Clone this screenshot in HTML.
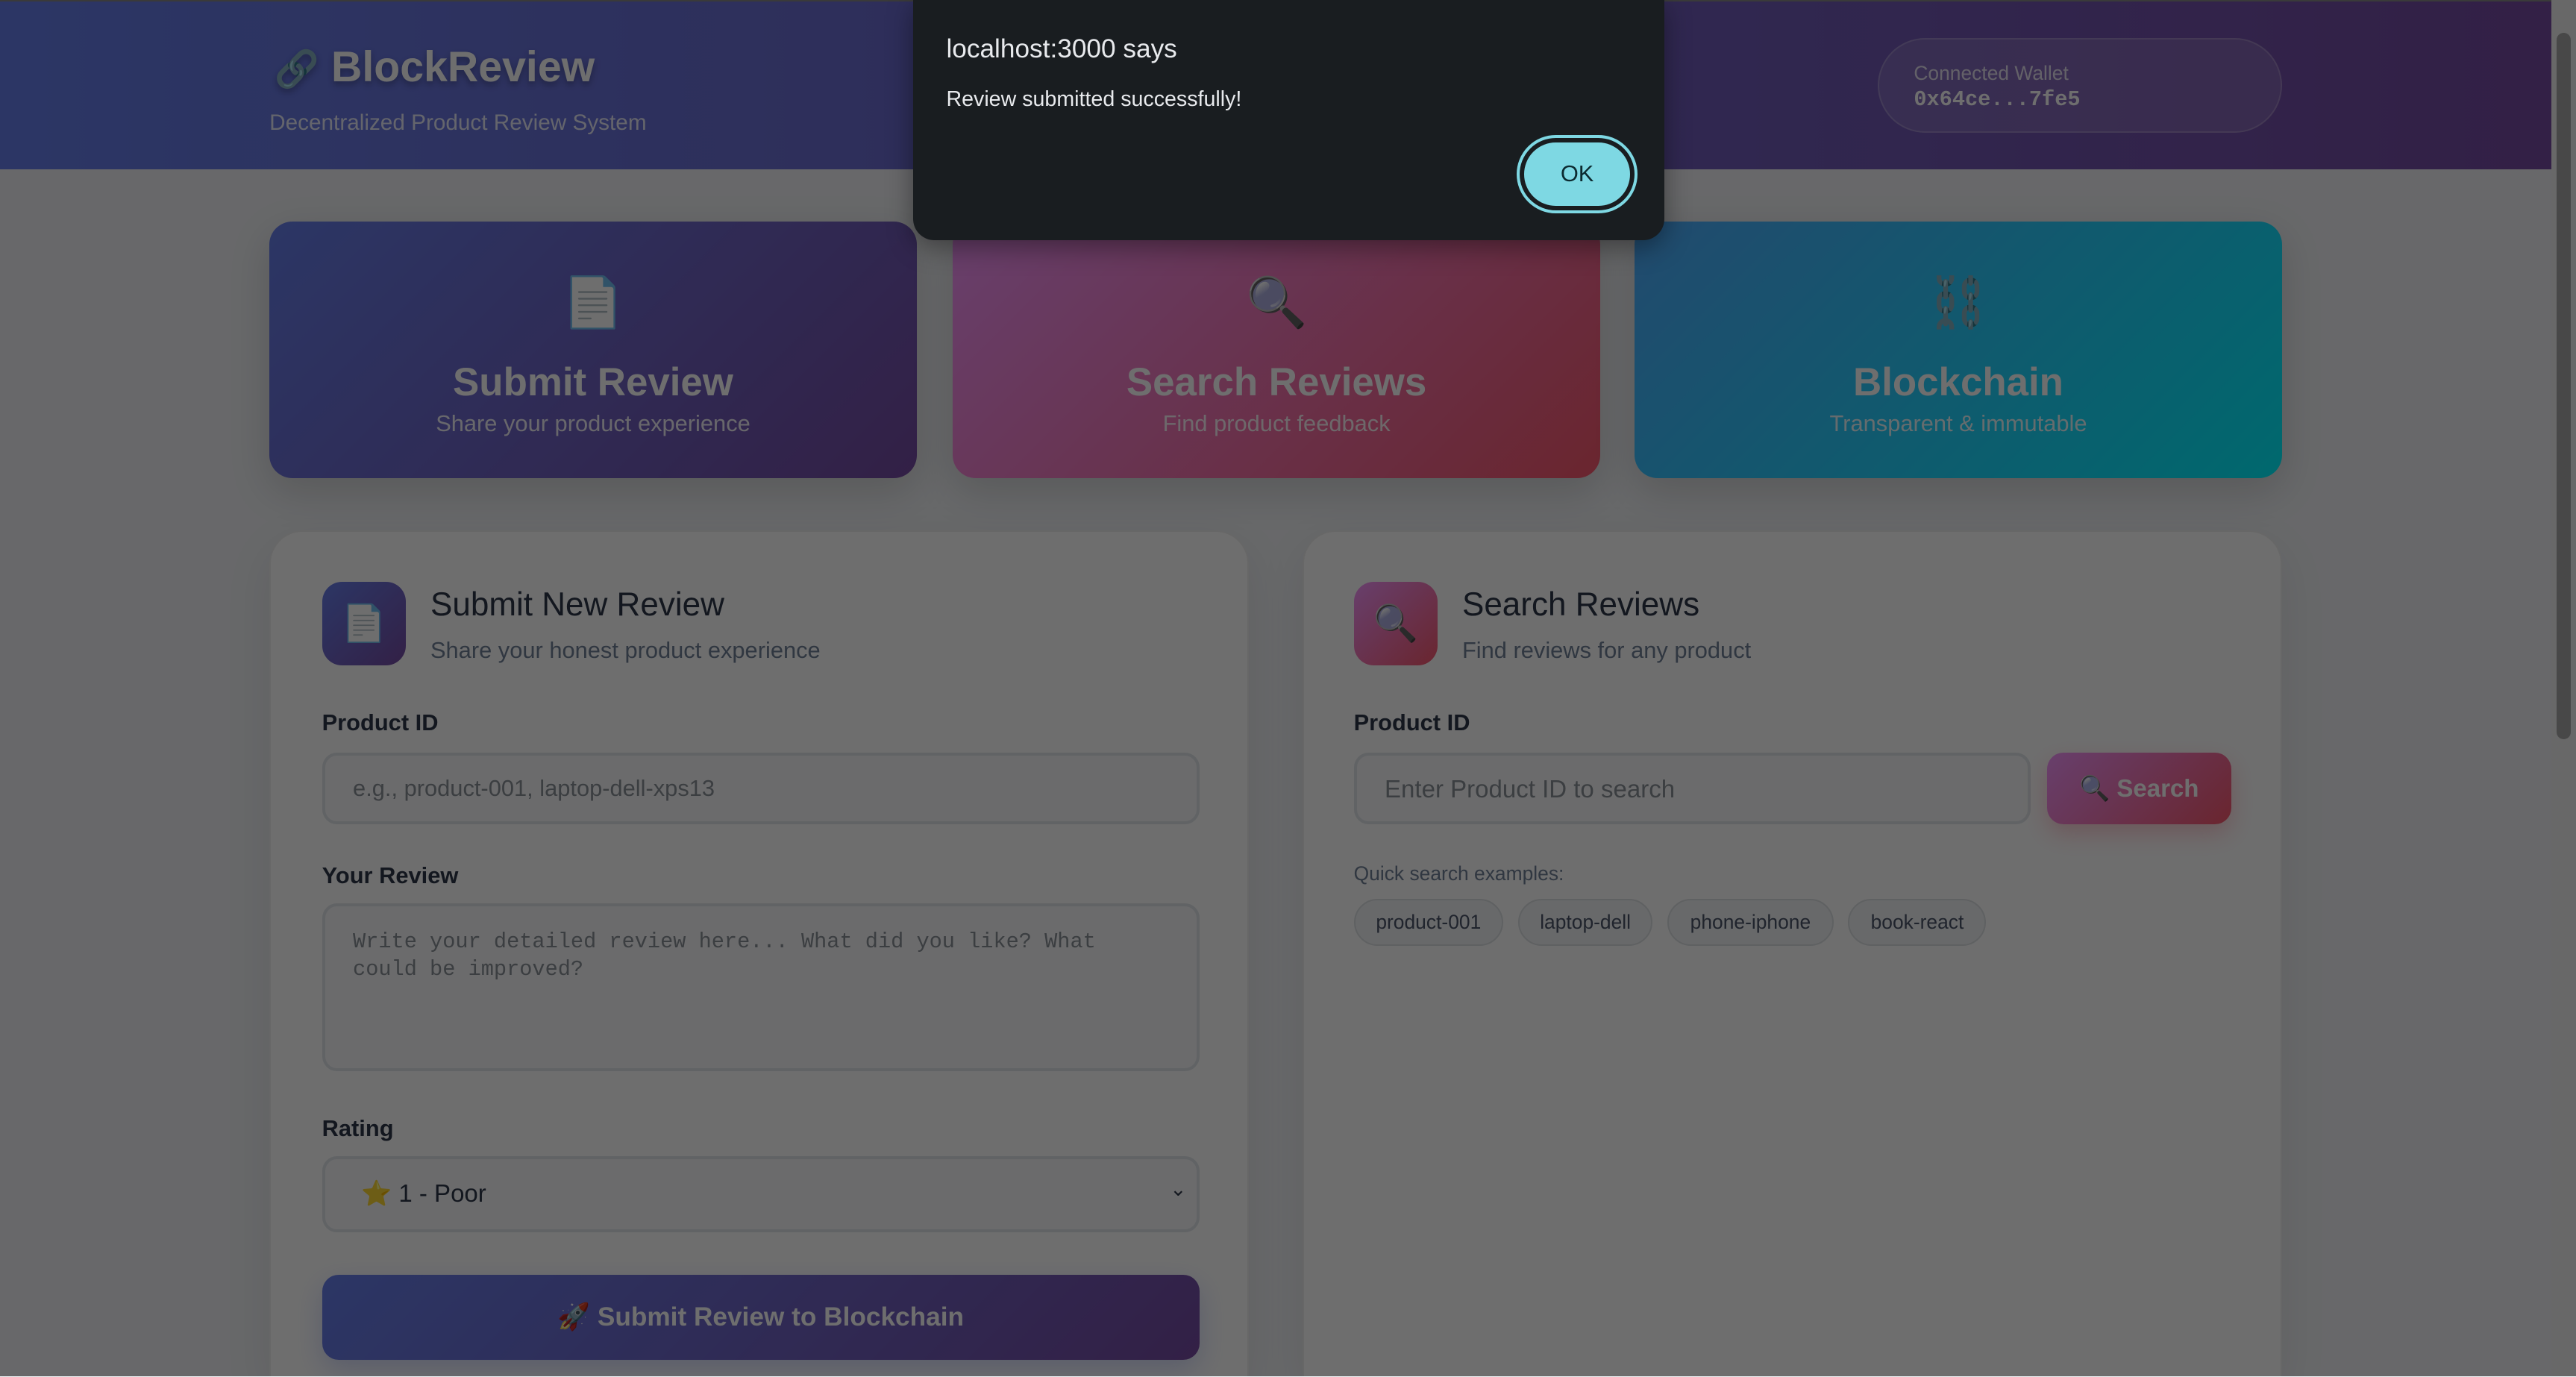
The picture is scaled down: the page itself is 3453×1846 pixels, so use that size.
<!DOCTYPE html>
<html><head><meta charset="utf-8">
<style>
*{box-sizing:border-box;margin:0;padding:0}
html,body{width:3453px;height:1846px;overflow:hidden;background:#f0f2f5}
#root{zoom:2.2022;position:relative;width:1568px;height:838px;font-family:"Liberation Sans","DejaVu Sans",sans-serif;overflow:hidden;background:#f0f2f5}
.abs{position:absolute}
.header{left:0;top:1px;width:1553px;height:102px;background:linear-gradient(90deg,#667eea 0%,#764ba2 100%)}
.topline{left:0;top:0;width:1568px;height:1px;background:#888}
.logo{left:167px;top:26px;font-size:26px;font-weight:bold;color:#fff;text-shadow:0 2px 4px rgba(0,0,0,.3)}
.sub{left:164px;top:67px;font-size:13.5px;color:rgba(255,255,255,.85)}
.wallet{left:1143px;top:23px;width:246px;height:58px;border-radius:29px;background:rgba(255,255,255,.12);border:1px solid rgba(255,255,255,.2);padding:14px 0 0 21px;color:rgba(255,255,255,.8)}
.wallet .a{font-size:12px}
.wallet .b{font-family:"Liberation Mono",monospace;font-weight:bold;font-size:13px;color:#fff;margin-top:1px}
.fc{top:135px;width:394px;height:156px;border-radius:14px;color:#fff;text-align:center;box-shadow:0 8px 25px rgba(0,0,0,.15)}
.fc .i{font-size:30px;margin-top:28px;height:42px;line-height:42px}
.fc .t{font-size:24px;font-weight:bold;margin-top:14px}
.fc .s{font-size:14px;opacity:.9;margin-top:3px}
.panel{top:323px;width:596px;height:516px;background:#fff;border-radius:20px 20px 0 0;box-shadow:0 10px 30px rgba(0,0,0,.08);border:1px solid #eee}
.ib{width:51px;height:51px;border-radius:12px;font-size:22px;text-align:center;line-height:51px}
.h{font-size:20px;color:#2d3748}
.hs{font-size:14px;color:#718096}
.lbl{font-size:14px;font-weight:bold;color:#2d3748}
.inp{height:44px;border:2px solid #e1e5e9;border-radius:9px;background:#f8f9fa;font-size:14px;color:#8a8f96;padding:12px 0 0 17px}
.chip{top:547px;height:29px;border:1px solid #dde0e4;border-radius:15px;background:#f1f3f5;font-size:12px;color:#4a5568;text-align:center;line-height:27px}
.overlay{left:0;top:0;width:1568px;height:838px;background:rgba(0,0,0,.57)}
.dlg{left:556px;top:0;width:457px;height:146px;background:#191d20;border-radius:0 0 13px 13px;box-shadow:0 4px 16px rgba(0,0,0,.4);color:#e8eaed;font-family:"Liberation Sans","DejaVu Sans",sans-serif}
.ok{left:369px;top:84px;width:70px;height:44px;border-radius:22px;background:#7ed8e3;border:3px solid #191d20;outline:2px solid #7ed8e3;color:#0c2a30;font-size:14px;text-align:center;line-height:38px}
</style></head><body><div id="root">
<div class="abs topline"></div>
<div class="abs header"></div>
<div class="abs logo"><span style="font-size:22px;font-weight:normal">🔗</span> BlockReview</div>
<div class="abs sub">Decentralized Product Review System</div>
<div class="abs wallet"><div class="a">Connected Wallet</div><div class="b">0x64ce...7fe5</div></div>

<div class="abs fc" style="left:164px;background:linear-gradient(135deg,#667eea,#764ba2)"><div class="i">📄</div><div class="t">Submit Review</div><div class="s">Share your product experience</div></div>
<div class="abs fc" style="left:580px;background:linear-gradient(135deg,#f093fb,#f5576c)"><div class="i">🔍</div><div class="t">Search Reviews</div><div class="s">Find product feedback</div></div>
<div class="abs fc" style="left:995px;background:linear-gradient(135deg,#4facfe,#00f2fe)"><div class="i">⛓️</div><div class="t">Blockchain</div><div class="s">Transparent &amp; immutable</div></div>

<div class="abs panel" style="left:164px"></div>
<div class="abs panel" style="left:793px"></div>

<div class="abs ib" style="left:196px;top:354px;background:linear-gradient(135deg,#667eea,#764ba2)">📄</div>
<div class="abs h" style="left:262px;top:357px">Submit New Review</div>
<div class="abs hs" style="left:262px;top:388px">Share your honest product experience</div>
<div class="abs lbl" style="left:196px;top:432px">Product ID</div>
<div class="abs inp" style="left:196px;top:458px;width:534px">e.g., product-001, laptop-dell-xps13</div>
<div class="abs lbl" style="left:196px;top:525px">Your Review</div>
<div class="abs inp" style="left:196px;top:550px;width:534px;height:102px;font-family:'Liberation Mono',monospace;font-size:13px;line-height:17px;padding-top:13px;padding-right:60px">Write your detailed review here... What did you like? What could be improved?</div>
<div class="abs lbl" style="left:196px;top:679px">Rating</div>
<div class="abs inp" style="left:196px;top:704px;width:534px;height:46px;color:#2d3748;font-size:15px;padding-left:22px">⭐ 1 - Poor<span style="position:absolute;right:6px;top:11px;font-size:12px">⌄</span></div>
<div class="abs" style="left:196px;top:776px;width:534px;height:52px;border-radius:10px;background:linear-gradient(135deg,#667eea,#764ba2);color:#fff;font-size:16px;font-weight:bold;text-align:center;line-height:52px;box-shadow:0 6px 16px rgba(102,126,234,.3)">🚀 Submit Review to Blockchain</div>

<div class="abs ib" style="left:824px;top:354px;background:linear-gradient(135deg,#f093fb,#f5576c)">🔍</div>
<div class="abs h" style="left:890px;top:357px">Search Reviews</div>
<div class="abs hs" style="left:890px;top:388px">Find reviews for any product</div>
<div class="abs lbl" style="left:824px;top:432px">Product ID</div>
<div class="abs inp" style="left:824px;top:458px;width:412px;font-size:15px">Enter Product ID to search</div>
<div class="abs" style="left:1246px;top:458px;width:112px;height:44px;border-radius:10px;background:linear-gradient(135deg,#f093fb,#f5576c);color:#fff;font-size:15px;font-weight:bold;text-align:center;line-height:44px;box-shadow:0 6px 14px rgba(245,87,108,.3)">🔍 Search</div>
<div class="abs" style="left:824px;top:525px;font-size:12px;color:#718096">Quick search examples:</div>
<div class="abs chip" style="left:824px;width:91px">product-001</div>
<div class="abs chip" style="left:924px;width:82px">laptop-dell</div>
<div class="abs chip" style="left:1015px;width:101px">phone-iphone</div>
<div class="abs chip" style="left:1125px;width:84px">book-react</div>

<div class="abs" style="left:1553px;top:0;width:15px;height:838px;background:#f0f0f0"></div>
<div class="abs" style="left:1556px;top:20px;width:9px;height:430px;background:#a8a8a8;border-radius:5px"></div>

<div class="abs overlay"></div>

<div class="abs dlg">
  <div class="abs" style="left:20px;top:21px;font-size:16px">localhost:3000 says</div>
  <div class="abs" style="left:20px;top:53px;font-size:13px">Review submitted successfully!</div>
  <div class="abs ok">OK</div>
</div>
</div></body></html>
